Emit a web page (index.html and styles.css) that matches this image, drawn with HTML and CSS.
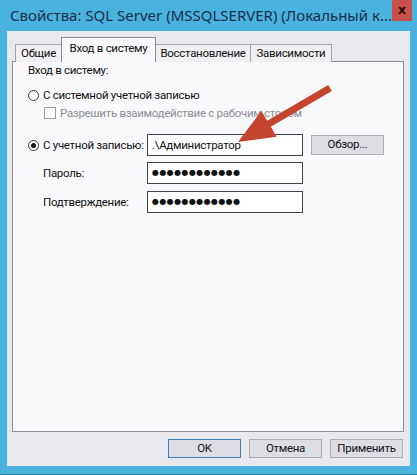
FILE: index.html
```html
<!DOCTYPE html>
<html lang="ru">
<head>
    <meta charset="UTF-8">
    <title>Свойства: SQL Server (MSSQLSERVER)</title>
    <link rel="stylesheet" href="styles.css">
</head>
<body>
    <div class="window">
        <div class="titlebar">
            <span class="title">Свойства: SQL Server (MSSQLSERVER) (Локальный к...</span>
            <div class="close">x</div>
        </div>
        <div class="client">
            <div class="tabs">
                <div class="tab tab-general">Общие</div>
                <div class="tab tab-logon active">Вход в систему</div>
                <div class="tab tab-recovery">Восстановление</div>
                <div class="tab tab-deps">Зависимости</div>
            </div>
            <div class="panel">
                <div class="group-title">Вход в систему:</div>
                <div class="row row-system">
                    <span class="radio"></span>
                    <span>С системной учетной записью</span>
                </div>
                <div class="row row-desktop disabled">
                    <span class="checkbox"></span>
                    <span>Разрешить взаимодействие с рабочим столом</span>
                </div>
                <div class="row row-account">
                    <div class="label">
                        <span class="radio checked"></span>
                        <span>С учетной записью:</span>
                    </div>
                    <div class="field">.\Администратор</div>
                    <div class="btn btn-browse">Обзор...</div>
                </div>
                <div class="row row-password">
                    <div class="label indent">Пароль:</div>
                    <div class="field dots">●●●●●●●●●●●●</div>
                </div>
                <div class="row row-confirm">
                    <div class="label indent">Подтверждение:</div>
                    <div class="field dots">●●●●●●●●●●●●</div>
                </div>
            </div>
            <div class="buttons">
                <div class="btn default">OK</div>
                <div class="btn">Отмена</div>
                <div class="btn">Применить</div>
            </div>
        </div>
        <svg class="arrow" width="417" height="475" viewBox="0 0 417 475">
            <polygon points="328.2,85 267.2,120.8 261.4,110.9 238,142 276.6,136.7 270.8,126.8 331.8,91" fill="#c4442d"/>
        </svg>
    </div>
</body>
</html>
```

FILE: styles.css
```css
html, body {
    margin: 0;
    padding: 0;
    background-color: #4ab2de;
}
.window {
    position: relative;
    width: 417px;
    height: 475px;
    box-sizing: border-box;
    padding: 0 7px 8px 7px;
    background-color: #4ab2de;
    border-bottom: 1px solid #2c7ea5;
    font-family: Roboto, "Noto Sans", sans-serif;
    font-size: 11.5px;
    letter-spacing: -0.3px;
    color: #111;
}
.titlebar {
    height: 31px;
    display: flex;
    align-items: flex-start;
    justify-content: space-between;
}
.title {
    margin-top: 5px;
    padding-left: 3px;
    font-family: "Noto Sans", sans-serif;
    font-size: 15px;
    letter-spacing: 0;
    line-height: 20px;
    color: #1b2d4c;
    white-space: nowrap;
}
.close {
    width: 33px;
    height: 21px;
    margin-right: -2px;
    background-color: #c9504a;
    color: #2a0d0d;
    font-family: "DejaVu Sans", sans-serif;
    font-weight: bold;
    font-size: 13px;
    letter-spacing: 0;
    line-height: 19px;
    text-align: center;
}
.client {
    height: 435px;
    box-sizing: border-box;
    padding: 7px 6px 0 5px;
    background-color: #e9e8ef;
}
.tabs {
    display: flex;
    align-items: flex-end;
    height: 23px;
    padding-left: 3px;
}
.tab {
    position: relative;
    height: 17px;
    margin-right: -1px;
    margin-bottom: -1px;
    border: 1px solid #a3a3aa;
    border-bottom: none;
    background-color: #f0f0f3;
    text-align: center;
    line-height: 17px;
    white-space: nowrap;
}
.tab.active {
    z-index: 1;
    height: 24px;
    background-color: #f9f9fc;
    border-color: #8c8d94;
    line-height: 20px;
}
.tab-general { width: 45px; }
.tab-logon { width: 93px; }
.tab-recovery { width: 94px; }
.tab-deps { width: 80px; }
.panel {
    height: 371px;
    box-sizing: border-box;
    padding: 0 0 0 15px;
    border: 1px solid #8c8d94;
    background-color: #f9f9fc;
}
.group-title {
    line-height: 16px;
}
.row {
    display: flex;
    align-items: center;
    white-space: nowrap;
}
.row-system {
    margin-top: 9px;
    height: 16px;
}
.row-desktop {
    margin-top: 2px;
    height: 16px;
    padding-left: 16px;
}
.row-account {
    margin-top: 13px;
}
.row-password {
    margin-top: 6px;
}
.row-confirm {
    margin-top: 7px;
}
.disabled {
    color: #8d8d92;
}
.radio {
    width: 9px;
    height: 9px;
    margin-right: 4px;
    border: 1px solid #3a3a3a;
    border-radius: 50%;
    background-color: #fff;
    display: flex;
    align-items: center;
    justify-content: center;
}
.radio.checked::after {
    content: "";
    width: 5px;
    height: 5px;
    border-radius: 50%;
    background-color: #111;
}
.checkbox {
    width: 10px;
    height: 10px;
    margin-right: 4px;
    border: 1px solid #9a9a9f;
    background-color: #fff;
}
.label {
    width: 119px;
    box-sizing: border-box;
    display: flex;
    align-items: center;
}
.label.indent {
    padding-left: 15px;
}
.field {
    width: 156px;
    height: 22px;
    box-sizing: border-box;
    padding-left: 4px;
    border: 1px solid #3d4447;
    background-color: #fff;
    line-height: 20px;
}
.dots {
    font-family: "DejaVu Sans", sans-serif;
    font-size: 8px;
    letter-spacing: 0.4px;
}
.btn {
    width: 73px;
    height: 19px;
    box-sizing: border-box;
    border: 1px solid #adadb2;
    background-color: #dedde3;
    text-align: center;
    line-height: 17px;
}
.btn-browse {
    margin-left: 8px;
    height: 20px;
}
.btn.default {
    border-color: #3d7fb8;
}
.buttons {
    display: flex;
    justify-content: flex-end;
    gap: 8px;
    margin-top: 7px;
    margin-right: 1px;
}
.arrow {
    position: absolute;
    left: 0;
    top: 0;
    pointer-events: none;
}
```
